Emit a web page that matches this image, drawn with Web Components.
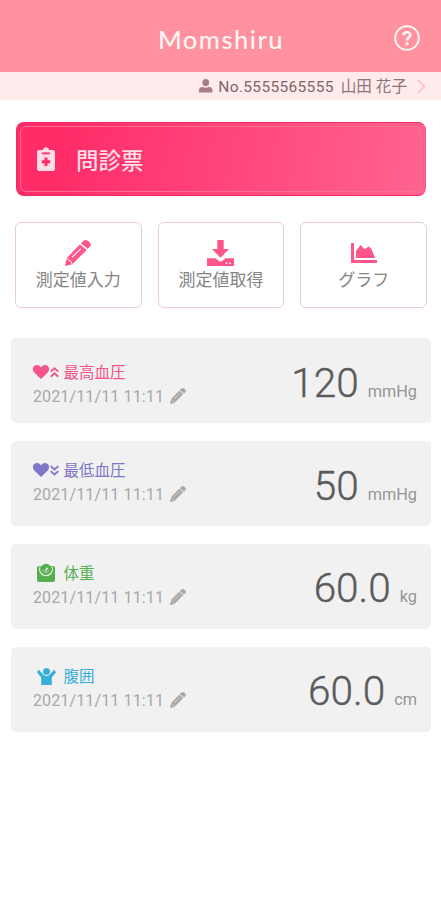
<!DOCTYPE html>
<html lang="ja">
<head>
<meta charset="utf-8">
<meta name="viewport" content="width=device-width">
<title>Momshiru</title>
<style>
body{margin:0;background:#fff;font-family:Roboto,"Noto Sans CJK JP",sans-serif}
</style>
</head>
<body>
<mom-app></mom-app>
<script>
const define = (name, html) => customElements.define(name, class extends HTMLElement {
  constructor() {
    super();
    const t = document.createElement('template');
    t.innerHTML = html;
    this.attachShadow({mode: 'open'}).append(t.content.cloneNode(true));
  }
});

const icons = {
  help: '<circle cx="13" cy="13" r="11.8" fill="none" stroke="currentColor" stroke-width="2"/><path d="M9.2 10.2C9.8 6.2 16.4 6.3 16.3 10.1C16.2 12.5 13 12.6 13 15.6" fill="none" stroke="currentColor" stroke-width="2.7"/><circle cx="13" cy="18.8" r="1.7"/>',
  user: '<ellipse cx="7" cy="3.7" rx="3.5" ry="3.7"/><path d="M0 14V11.7Q.2 8.3 4 8.3Q7 9.6 10 8.3Q13.8 8.3 14 11.7V14Z"/>',
  clipboard: '<path fill-rule="evenodd" d="M2 3H6C6 1.3 7.3.3 9 .3S12 1.3 12 3H16Q18 3 18 5V22Q18 24 16 24H2Q0 24 0 22V5Q0 3 2 3ZM4.8 5.6V7.2H13.2V5.6ZM7.6 10.5V13.2H4.8V16.2H7.6V19H10.5V16.2H13.2V13.2H10.5V10.5Z"/>',
  pencil: '<path d="M18.2 1.2Q19.6-.1 21-.1Q23 .3 24.8 2.5Q26.7 4.7 25.3 6.3L22.8 8.8L15.9 3.5Z"/><path d="M14.8 4.6L21.7 9.9L7.3 24.2L0 26L1.8 18Z"/><path d="M6.8 17.4L16 8.6" stroke="var(--cut,#fff)" stroke-width="1.1" fill="none"/><path d="M1.9 18L3.8 20.5L5.6 21L7.3 24.2" stroke="var(--cut,#fff)" stroke-width=".9" fill="none"/>',
  download: '<path d="M10.3 0H16.7V9H22L13.5 17.8L5 9H10.3Z"/><path fill-rule="evenodd" d="M0 18.2H8.2L13.5 22L18.8 18.2H27V26H0ZM18.7 22.5V24H20.2V22.5ZM22.2 22.5V24H23.7V22.5Z"/>',
  chart: '<path d="M0 0H3V17H26V20H0Z"/><path d="M5 15V8L9.7 2L13.5 6.2L17.8 3.5L20.5 6L24 15Z"/>',
  heart: '<path d="M8 14L1 7.2C-1.3 4.3.3 0 4 0C6 0 7.2 1.2 8 2.4C8.8 1.2 10 0 12 0C15.7 0 17.3 4.3 15 7.2Z"/>',
  up: '<path d="M.8 5.2L5 1.4L9.2 5.2M.8 10.8L5 7L9.2 10.8" fill="none" stroke="currentColor" stroke-width="2"/>',
  down: '<path d="M.8 1.2L5 5L9.2 1.2M.8 6.8L5 10.6L9.2 6.8" fill="none" stroke="currentColor" stroke-width="2"/>',
  scale: '<path d="M2 2H16Q18 2 18 4V16Q18 18 16 18H2Q0 18 0 16V4Q0 2 2 2Z"/><path d="M3.2 2.5A6.4 6.4 0 1 0 14.8 2.5" stroke="#e4f0e2" stroke-width="1.1" fill="none"/><circle cx="9" cy="5.2" r="5.4"/><path d="M8.4 6.8L10.6 3.8" stroke="#e4f0e2" stroke-width="1.5"/><path d="M5.8 6Q6.6 8.4 9 8.4Q11 8.4 12 6.4" stroke="#c4e2c0" fill="none" stroke-width=".8"/>',
  person: '<circle cx="9.5" cy="3.6" r="3.5"/><path d="M1.8 1.8L6.4 6.8Q9.5 9.2 12.6 6.8L17.2 1.8L19 4.2L14.8 9.6V17H4.2V9.6L0 4.2Z"/>',
  chevron: '<path d="M1 1L7.5 7.5L1 14" fill="none" stroke="currentColor" stroke-width="1.2"/>'
};

customElements.define('mom-icon', class extends HTMLElement {
  constructor() { super(); this.attachShadow({mode: 'open'}); }
  connectedCallback() {
    const [w, h] = this.getAttribute('box').split(' ');
    const width = this.getAttribute('width') || w;
    this.shadowRoot.innerHTML = `<style>:host{display:block;flex:none}svg{display:block;fill:currentColor;overflow:visible}</style><svg width="${width}" height="${h * width / w}" viewBox="0 0 ${w} ${h}">${icons[this.getAttribute('name')]}</svg>`;
  }
});

define('mom-header', `<style>
:host{display:grid;grid-template-columns:1fr auto 1fr;align-items:center;height:72px;background:#ff929e;color:#fff5f4}
h1{grid-column:2;margin:5px 0 0 1px;font:500 25.5px/32px Lato,sans-serif;letter-spacing:1.5px;white-space:nowrap}
mom-icon{justify-self:end;margin:4px 21px 0 0}
</style><h1><slot></slot></h1><mom-icon name="help" box="26 26"></mom-icon>`);

define('mom-user', `<style>
:host{display:flex;align-items:center;justify-content:flex-end;box-sizing:border-box;height:28px;padding-right:16px;background:#ffebec;font-size:15.5px;line-height:20px;white-space:nowrap}
mom-icon{margin-right:6px;color:#a77e84}
.no{color:#7d6468;letter-spacing:.33px;margin-top:2px}
.name{margin:2px 10px 0 7px;color:#8d7477;font-size:15.6px}
.go{color:#ffafbc;margin:0}
</style><mom-icon name="user" box="14 14" width="13.5"></mom-icon><span class="no"><slot name="number"></slot></span><span class="name"><slot></slot></span><mom-icon class="go" name="chevron" box="8 15" width="8"></mom-icon>`);

define('mom-primary', `<style>
:host{display:block;box-sizing:border-box;height:74px;padding:3px;border:1px solid #ef2968;border-right-color:#f85585;border-radius:8px;background:linear-gradient(100deg,#ff2c68 12%,#ff628d 96%) border-box;color:#ffdce6}
.inner{display:flex;align-items:center;box-sizing:border-box;height:66px;padding-left:16px;border:1px solid #ff6d95;border-radius:6px;gap:21px;font-size:22.5px;font-weight:500;line-height:30px}
span{margin-top:3px}
</style><div class="inner"><mom-icon name="clipboard" box="18 24"></mom-icon><span><slot></slot></span></div>`);

define('mom-action', `<style>
:host{display:flex;flex-direction:column;align-items:center;box-sizing:border-box;height:86px;border:1px solid #ebcdd6;border-radius:6px;color:#ff5589;padding-top:15px}
.icon{height:29px;display:flex;align-items:center}
.label{margin-top:1px;color:#858585;font-size:17px;line-height:24px;white-space:nowrap}
</style><div class="icon"><slot name="icon"></slot></div><span class="label"><slot></slot></span>`);

define('mom-reading', `<style>
:host{display:flex;justify-content:space-between;align-items:flex-start;box-sizing:border-box;height:85px;border-radius:5px;background:#f1f1f1;padding:var(--top,19px) 14px 0 22px}
.title{display:flex;align-items:center;height:20px;color:var(--tone);font-size:15.5px;line-height:20px}
.label{margin-top:2px}
.icons{display:flex;align-items:center;width:30.5px;gap:1px}
.date{display:flex;align-items:center;height:24px;margin-top:3px;gap:6px;color:#a8a8a8;font-size:16px;letter-spacing:.13px;line-height:24px;white-space:nowrap}
.date mom-icon{--cut:#e0e0e0;margin-top:-3px}
.value{display:flex;align-items:baseline;gap:9px;margin-top:var(--shift,0);color:#5a5a5a;font-size:40.5px;font-weight:300;line-height:48px;-webkit-text-stroke:.4px #5a5a5a}
.unit{font-size:16.3px;font-weight:400;color:#959595;-webkit-text-stroke:0}
</style><div><div class="title"><div class="icons"><slot name="icon"></slot></div><span class="label"><slot></slot></span></div>
<div class="date"><slot name="date"></slot><mom-icon name="pencil" box="26 26" width="16"></mom-icon></div></div>
<div class="value"><slot name="value"></slot><span class="unit"><slot name="unit"></slot></span></div>`);

const reading = (tone, icon, label, value, unit, style = '') =>
 `<mom-reading style="--tone:${tone};${style}">${icon}${label}<span slot="date">2021/11/11 11:11</span><span slot="value">${value}</span><span slot="unit">${unit}</span></mom-reading>`;

define('mom-app', `<style>
:host{display:block;min-height:900px;background:#fff}
main{padding:22px 10px 0 11px}
mom-primary{margin:0 5px 0 5px}
nav{display:grid;grid-template-columns:repeat(3,1fr);gap:16px;margin:26px 4px 30px 4px}
section{display:grid;gap:18px}
.scale,.person{margin-left:4px}
</style>
<mom-header>Momshiru</mom-header>
<mom-user><span slot="number">No.5555565555</span>山田 花子</mom-user>
<main>
<mom-primary>問診票</mom-primary>
<nav>
<mom-action><mom-icon slot="icon" name="pencil" box="26 26"></mom-icon>測定値入力</mom-action>
<mom-action><mom-icon slot="icon" name="download" box="27 26"></mom-icon>測定値取得</mom-action>
<mom-action><mom-icon slot="icon" name="chart" box="26 20"></mom-icon>グラフ</mom-action>
</nav>
<section>
${reading('#f5548a', '<mom-icon slot="icon" name="heart" box="16 14"></mom-icon><mom-icon slot="icon" name="up" box="10 12" width="9"></mom-icon>', '最高血圧', '120', 'mmHg', '--top:24px;--shift:-3px')}
${reading('#7e76c6', '<mom-icon slot="icon" name="heart" box="16 14"></mom-icon><mom-icon slot="icon" name="down" box="10 12" width="9"></mom-icon>', '最低血圧', '50', 'mmHg', '--shift:2px')}
${reading('#57ae50', '<mom-icon class="scale" slot="icon" name="scale" box="18 18"></mom-icon>', '体重', '60.0', 'kg', '--shift:1px')}
${reading('#38afd9', '<mom-icon class="person" slot="icon" name="person" box="19 17"></mom-icon>', '腹囲', '60.0', 'cm', '--shift:1px')}
</section>
</main>`);
</script>
</body>
</html>
